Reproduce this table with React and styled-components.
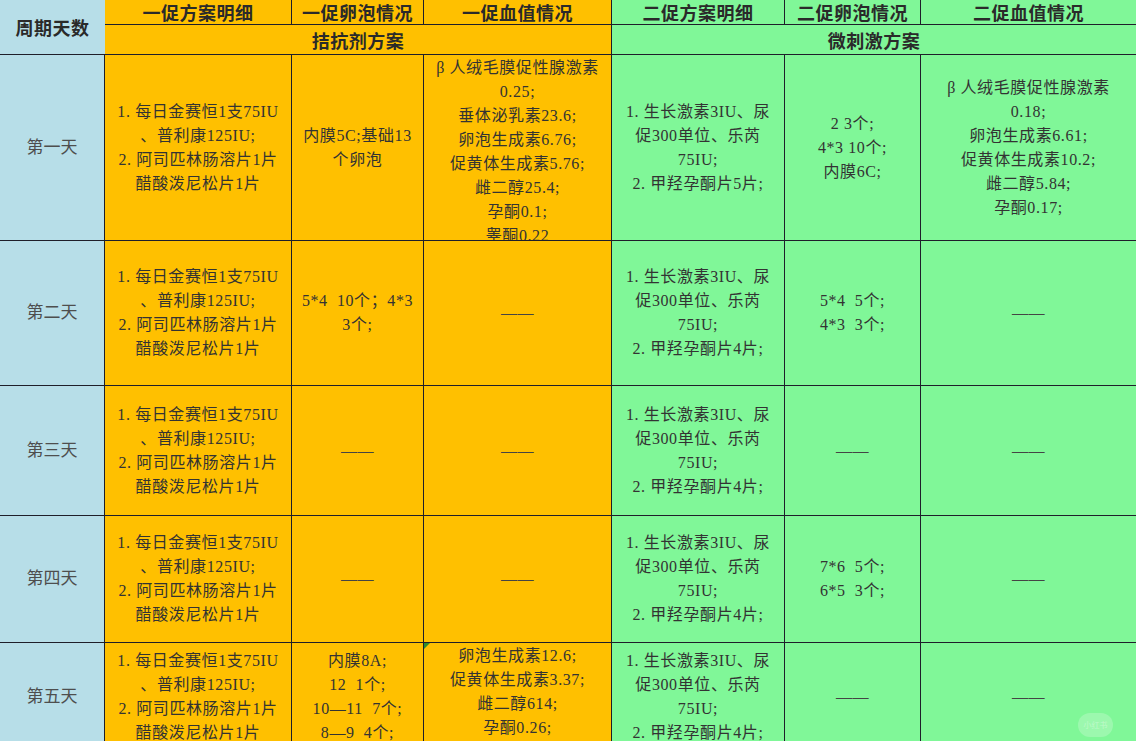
import React from "react";
import styled, { createGlobalStyle } from "styled-components";

const GlobalStyle = createGlobalStyle`
  html, body {
    margin: 0;
    padding: 0;
    overflow: hidden;
    background: #ffffff;
  }
`;

const tones = {
  blue: "#b7dee8",
  orange: "#ffc000",
  green: "#80f798",
};

const fourLinesA = [
  "1. 每日金赛恒1支75IU",
  "、普利康125IU;",
  "2. 阿司匹林肠溶片1片",
  "醋酸泼尼松片1片",
];

const secondPlan = (n) => [
  "1. 生长激素3IU、尿",
  "促300单位、乐芮",
  "75IU;",
  `2. 甲羟孕酮片${n}片;`,
];

const DASH = ["——"];

const days = [
  {
    label: "第一天",
    cells: [
      { lines: fourLinesA },
      { lines: ["内膜5C;基础13", "个卵泡"] },
      {
        lines: [
          "β 人绒毛膜促性腺激素",
          "0.25;",
          "垂体泌乳素23.6;",
          "卵泡生成素6.76;",
          "促黄体生成素5.76;",
          "雌二醇25.4;",
          "孕酮0.1;",
          "睾酮0.22",
        ],
        top: true,
      },
      { lines: secondPlan(5) },
      { lines: ["2 3个;", "4*3 10个;", "内膜6C;"] },
      {
        lines: [
          "β 人绒毛膜促性腺激素",
          "0.18;",
          "卵泡生成素6.61;",
          "促黄体生成素10.2;",
          "雌二醇5.84;",
          "孕酮0.17;",
        ],
      },
    ],
  },
  {
    label: "第二天",
    cells: [
      { lines: fourLinesA },
      { lines: ["5*4  10个；4*3", "3个;"] },
      { lines: DASH },
      { lines: secondPlan(4) },
      { lines: ["5*4  5个;", "4*3  3个;"] },
      { lines: DASH },
    ],
  },
  {
    label: "第三天",
    cells: [
      { lines: fourLinesA },
      { lines: DASH },
      { lines: DASH },
      { lines: secondPlan(4) },
      { lines: DASH },
      { lines: DASH },
    ],
  },
  {
    label: "第四天",
    cells: [
      { lines: fourLinesA },
      { lines: DASH },
      { lines: DASH },
      { lines: secondPlan(4) },
      { lines: ["7*6  5个;", "6*5  3个;"] },
      { lines: DASH },
    ],
  },
  {
    label: "第五天",
    cells: [
      { lines: fourLinesA },
      { lines: ["内膜8A;", "12  1个;", "10—11  7个;", "8—9  4个;"] },
      {
        lines: ["卵泡生成素12.6;", "促黄体生成素3.37;", "雌二醇614;", "孕酮0.26;"],
        top: true,
        flag: true,
      },
      { lines: secondPlan(4) },
      { lines: DASH },
      { lines: DASH },
    ],
  },
];

const App = () => {
  return (
    <>
      <GlobalStyle />
      <Sheet>
        <Cell $tone="blue" $rows={2} $noRight>
          <HeadText>周期天数</HeadText>
        </Cell>
        <Cell $tone="orange"><HeadText>一促方案明细</HeadText></Cell>
        <Cell $tone="orange"><HeadText>一促卵泡情况</HeadText></Cell>
        <Cell $tone="orange"><HeadText>一促血值情况</HeadText></Cell>
        <Cell $tone="green"><HeadText>二促方案明细</HeadText></Cell>
        <Cell $tone="green"><HeadText>二促卵泡情况</HeadText></Cell>
        <Cell $tone="green" $noRight><HeadText>二促血值情况</HeadText></Cell>

        <Cell $tone="orange" $cols={3}><HeadText>拮抗剂方案</HeadText></Cell>
        <Cell $tone="green" $cols={3} $noRight><HeadText>微刺激方案</HeadText></Cell>

        {days.map((day) => (
          <React.Fragment key={day.label}>
            <Cell $tone="blue">
              <DayLabel>{day.label}</DayLabel>
            </Cell>
            {day.cells.map((c, i) => (
              <Cell
                key={i}
                $tone={i < 3 ? "orange" : "green"}
                $top={c.top}
                $flag={c.flag}
                $noRight={i === 5}
              >
                <Text>
                  {c.lines.map((l, j) => (
                    <Line key={j} $dash={l === "——"}>{l}</Line>
                  ))}
                </Text>
              </Cell>
            ))}
          </React.Fragment>
        ))}

        <Watermark>小红书</Watermark>
      </Sheet>
    </>
  );
};

export default App;

const Sheet = styled.div`
  position: relative;
  display: grid;
  grid-template-columns: 105px 187px 132px 188px 173px 136px 215px;
  grid-template-rows: 25px 30px 186px 145px 130px 127px 108px;
  width: 1136px;
  height: 741px;
  overflow: hidden;
  font-family: "Liberation Serif", "Noto Sans CJK SC", serif;
  color: #333;
`;

const Cell = styled.div`
  position: relative;
  box-sizing: border-box;
  display: flex;
  justify-content: center;
  align-items: ${(p) => (p.$top ? "flex-start" : "center")};
  padding-top: ${(p) => (p.$top ? "1px" : "0")};
  overflow: hidden;
  background: ${(p) => tones[p.$tone]};
  border-bottom: 1px solid #1e1e2a;
  border-right: ${(p) => (p.$noRight ? "none" : "1px solid #1e1e2a")};
  grid-column: ${(p) => (p.$cols ? `span ${p.$cols}` : "auto")};
  grid-row: ${(p) => (p.$rows ? `span ${p.$rows}` : "auto")};

  ${(p) =>
    p.$flag &&
    `
    &::before {
      content: "";
      position: absolute;
      left: 0;
      top: 0;
      border-top: 6px solid #2e8b2e;
      border-right: 6px solid transparent;
    }
  `}
`;

const HeadText = styled.div`
  font-family: "Noto Sans CJK SC", sans-serif;
  font-size: 18px;
  font-weight: 700;
  line-height: 24px;
  letter-spacing: 0.5px;
  color: #2a2a2a;
  white-space: nowrap;
`;

const DayLabel = styled.div`
  font-size: 17px;
  line-height: 24px;
  color: #4e4e4e;
  white-space: nowrap;
`;

const Text = styled.div`
  font-size: 16px;
  line-height: 24px;
  letter-spacing: 0.6px;
  text-align: center;
  color: #333;
`;

const Line = styled.div`
  white-space: pre;
  color: ${(p) => (p.$dash ? "#444" : "inherit")};
`;

const Watermark = styled.div`
  position: absolute;
  left: 1078px;
  top: 713px;
  width: 35px;
  height: 24px;
  border-radius: 12px;
  background: rgba(255, 255, 255, 0.22);
  color: rgba(255, 255, 255, 0.35);
  font-family: "Noto Sans CJK SC", sans-serif;
  font-size: 8px;
  line-height: 24px;
  text-align: center;
`;
